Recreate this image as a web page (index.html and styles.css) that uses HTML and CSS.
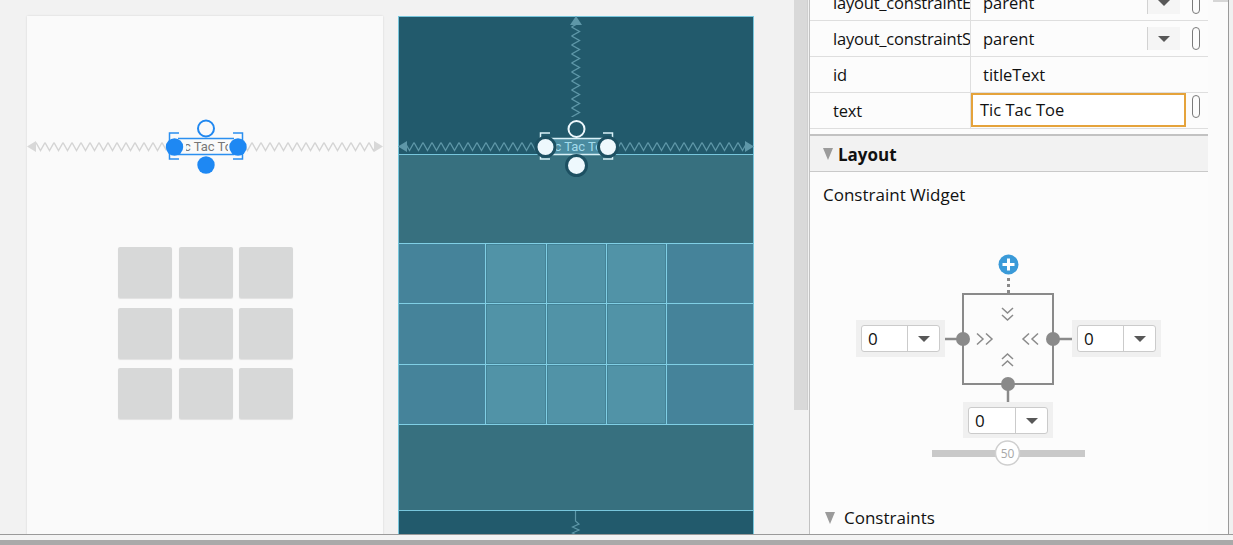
FILE: index.html
```html
<!DOCTYPE html>
<html>
<head>
<meta charset="utf-8">
<link rel="stylesheet" href="styles.css">
</head>
<body>
<div class="app">
  <div class="main">
    <div class="canvas">
      <div class="phone design">
        <div class="board">
          <div class="cell"></div><div class="cell"></div><div class="cell"></div>
          <div class="cell"></div><div class="cell"></div><div class="cell"></div>
          <div class="cell"></div><div class="cell"></div><div class="cell"></div>
        </div>
        <svg class="ov" viewBox="27 16 356 530" width="356" height="530">
          <defs>
            <pattern id="zh1" x="0" y="142" width="9" height="10" patternUnits="userSpaceOnUse">
              <path d="M0 0.5 L4.5 8.5 L9 0.5" fill="none" stroke="#d4d4d4" stroke-width="1.4"/>
            </pattern>
            <clipPath id="c1"><rect x="186" y="138" width="42" height="17"/></clipPath>
          </defs>
          <polygon points="27,146.5 36,141 36,152" fill="#d8d8d8"/>
          <rect x="36" y="142" width="130" height="10" fill="url(#zh1)"/>
          <rect x="246" y="142" width="129" height="10" fill="url(#zh1)"/>
          <polygon points="383,146.5 374,141 374,152" fill="#d8d8d8"/>
          <g fill="none" stroke="#2b8ff0" stroke-width="1.5">
            <path d="M179 133 H169.5 V159 H179"/>
            <path d="M233 133 H242.5 V159 H233"/>
            <path d="M178 138.5 H234 M178 154.5 H234"/>
          </g>
          <text x="206" y="151" text-anchor="middle" class="wtext" fill="#777" clip-path="url(#c1)">Tic Tac Toe</text>
          <circle cx="206" cy="128.5" r="8" fill="#fafafa" stroke="#2188f0" stroke-width="2"/>
          <circle cx="174.5" cy="147" r="8.7" fill="#1e88f3"/>
          <circle cx="238" cy="147" r="8.7" fill="#1e88f3"/>
          <circle cx="206" cy="165" r="8.7" fill="#1e88f3"/>
        </svg>
      </div>
      <div class="phone blueprint">
        <div class="bp-top"></div>
        <div class="bp-body">
          <div class="bp-table">
            <div class="bp-row"><div class="oc"></div><div class="ic"></div><div class="ic"></div><div class="ic"></div><div class="oc"></div></div>
            <div class="bp-row"><div class="oc"></div><div class="ic"></div><div class="ic"></div><div class="ic"></div><div class="oc"></div></div>
            <div class="bp-row"><div class="oc"></div><div class="ic"></div><div class="ic"></div><div class="ic"></div><div class="oc"></div></div>
          </div>
        </div>
        <div class="bp-bottom"></div>
        <svg class="ov ov-bp" viewBox="398 16 356 530" width="356" height="530">
          <defs>
            <pattern id="zh2" x="0" y="142" width="9" height="10" patternUnits="userSpaceOnUse">
              <path d="M0 0.5 L4.5 8.5 L9 0.5" fill="none" stroke="#5e97a8" stroke-width="1.3"/>
            </pattern>
            <pattern id="zv2" x="571" y="0" width="10" height="9" patternUnits="userSpaceOnUse">
              <path d="M0.5 0 L8.5 4.5 L0.5 9" fill="none" stroke="#5e97a8" stroke-width="1.3"/>
            </pattern>
            <clipPath id="c2"><rect x="556" y="138" width="43" height="17"/></clipPath>
          </defs>
          <polygon points="576,16 570,25 582,25" fill="#5e97a8"/>
          <rect x="571" y="25" width="10" height="92" fill="url(#zv2)"/>
          <polygon points="398,146.5 407,141 407,152" fill="#5e97a8"/>
          <rect x="407" y="142" width="129" height="10" fill="url(#zh2)"/>
          <rect x="617" y="142" width="128" height="10" fill="url(#zh2)"/>
          <polygon points="754,146.5 745,141 745,152" fill="#5e97a8"/>
          <rect x="553" y="138" width="47" height="17" fill="#4a8ba0"/>
          <g fill="none" stroke="#d9f1f8" stroke-width="1.5">
            <path d="M550 133 H540.5 V159 H550"/>
            <path d="M603 133 H612.5 V159 H603"/>
            <path d="M549 138.5 H605 M549 154.5 H605"/>
          </g>
          <text x="576.5" y="151" text-anchor="middle" class="wtext" fill="#a3dbec" clip-path="url(#c2)">Tic Tac Toe</text>
          <circle cx="576.5" cy="129" r="8" fill="none" stroke="#eef8fd" stroke-width="2"/>
          <circle cx="545.5" cy="147" r="9.5" fill="#eef8fd" stroke="#1d5062" stroke-width="3"/>
          <circle cx="608" cy="147" r="9.5" fill="#eef8fd" stroke="#1d5062" stroke-width="3"/>
          <circle cx="576.5" cy="165.5" r="10" fill="#eef8fd" stroke="#1d5062" stroke-width="3"/>
          <polyline points="575.5,511 575.5,521 579,524 572.5,527 579,530 572.5,533 576,535" fill="none" stroke="#5e97a8" stroke-width="1.2"/>
        </svg>
      </div>
    </div>
    <div class="vscroll"><div class="thumb"></div></div>
    <div class="panel">
      <div class="pcol">
        <div class="props">
          <div class="row">
            <div class="lbl">layout_constraintEnd_toEndOf</div>
            <div class="val"><span class="vtext">parent</span><span class="dd"><i class="tri"></i></span></div>
            <div class="pillcell"><span class="pill"></span></div>
          </div>
          <div class="row">
            <div class="lbl">layout_constraintStart_toStartOf</div>
            <div class="val"><span class="vtext">parent</span><span class="dd"><i class="tri"></i></span></div>
            <div class="pillcell"><span class="pill"></span></div>
          </div>
          <div class="row">
            <div class="lbl">id</div>
            <div class="val"><span class="vtext">titleText</span></div>
            <div class="pillcell"></div>
          </div>
          <div class="row">
            <div class="lbl">text</div>
            <div class="val"><span class="inp">Tic Tac Toe</span></div>
            <div class="pillcell"><span class="pill"></span></div>
          </div>
        </div>
        <div class="spacer"></div>
        <div class="sec-head"><i class="tri-down"></i><span>Layout</span></div>
        <div class="sec-body">
          <div class="cw-title">Constraint Widget</div>
          <div class="cw">
            <svg class="cw-svg" viewBox="840 240 330 230" width="330" height="230">
              <circle cx="1008.5" cy="264.5" r="10" fill="#3a9ad8"/>
              <path d="M1008.5 258.5 V270.5 M1002.5 264.5 H1014.5" stroke="#fff" stroke-width="3"/>
              <path d="M1008.5 278 V294" stroke="#8a8a8a" stroke-width="3" stroke-dasharray="3 3"/>
              <rect x="963" y="294" width="90" height="90" fill="none" stroke="#8a8a8a" stroke-width="2"/>
              <path d="M945 339 H963 M1053 339 H1072 M1008 384 V402" stroke="#8a8a8a" stroke-width="2.5"/>
              <circle cx="963" cy="339" r="7" fill="#8a8a8a"/>
              <circle cx="1053" cy="339" r="7" fill="#8a8a8a"/>
              <circle cx="1008" cy="384" r="7" fill="#8a8a8a"/>
              <g fill="none" stroke="#8a8a8a" stroke-width="1.5">
                <path d="M1002 308 L1007.5 313 L1013 308 M1002 315 L1007.5 320 L1013 315"/>
                <path d="M1002 359 L1007.5 354 L1013 359 M1002 366 L1007.5 361 L1013 366"/>
                <path d="M977 333.5 L983 339 L977 344.5 M986 333.5 L992 339 L986 344.5"/>
                <path d="M1029 333.5 L1023 339 L1029 344.5 M1038 333.5 L1032 339 L1038 344.5"/>
              </g>
              <rect x="932" y="450" width="153" height="7" fill="#c9c9c9"/>
              <circle cx="1007.5" cy="453" r="12" fill="#fff" stroke="#cfcfcf" stroke-width="1.5"/>
              <text x="1007.5" y="458" text-anchor="middle" class="slabel" fill="#a8a8a8">50</text>
            </svg>
            <div class="mdd mdd-left"><div class="mbox"><span class="num">0</span><span class="mbtn"><i class="tri"></i></span></div></div>
            <div class="mdd mdd-right"><div class="mbox"><span class="num">0</span><span class="mbtn"><i class="tri"></i></span></div></div>
            <div class="mdd mdd-bottom"><div class="mbox"><span class="num">0</span><span class="mbtn"><i class="tri"></i></span></div></div>
          </div>
          <div class="sub-head"><i class="tri-down"></i><span>Constraints</span></div>
        </div>
      </div>
      <div class="pstrip"><div class="pthumb"></div></div>
    </div>
    <div class="redge"></div>
  </div>
  <div class="bottom"><div class="bar"></div></div>
</div>
</body>
</html>
```

FILE: styles.css
```css
* { box-sizing: border-box; }
html, body { margin: 0; padding: 0; }
body {
  width: 1233px;
  height: 545px;
  overflow: hidden;
  background: #f2f2f2;
  font-family: "Open Sans", "Noto Sans", sans-serif;
  color: #111;
}
.app { display: flex; flex-direction: column; height: 545px; }
.main { display: flex; height: 534px; }
.bottom {
  height: 11px;
  border-top: 1px solid #9a9a9a;
  background: #f4f4f4;
  display: flex;
  flex-direction: column;
  justify-content: flex-end;
}
.bottom .bar { height: 5px; background: #a9a9a9; }

/* canvas */
.canvas {
  width: 794px;
  flex: none;
  padding: 16px 0 0 27px;
  display: flex;
  gap: 15px;
  overflow: hidden;
  background: #f2f2f2;
}
.phone { width: 356px; height: 530px; flex: none; position: relative; }
.ov { position: absolute; left: 0; top: 0; }
.ov-bp { left: -1px; top: -1px; }
.wtext { font-family: Roboto, "Liberation Sans", sans-serif; font-size: 13px; }

.design { background: #fafafa; box-shadow: 0 0 2px rgba(0,0,0,0.12); }
.board {
  display: grid;
  grid-template-columns: repeat(3, 54px);
  grid-auto-rows: 51px;
  column-gap: 6.5px;
  row-gap: 9.5px;
  padding: 231px 0 0 91px;
}
.cell {
  background: #d7d8d8;
  border-radius: 2px;
  box-shadow: 0 1px 1px rgba(0,0,0,0.10);
}

.blueprint {
  background: #225a6c;
  border: 1px solid #78c6dc;
  display: flex;
  flex-direction: column;
}
.bp-top { height: 137px; flex: none; }
.bp-body {
  height: 357px;
  flex: none;
  background: #37707f;
  border-top: 1px solid #78c6dc;
  border-bottom: 1px solid #78c6dc;
  padding-top: 88px;
}
.bp-table { border-top: 1px solid #80cfe5; }
.bp-row {
  display: grid;
  grid-template-columns: 86px 61px 60px 61px 1fr;
  height: 60px;
  background: #45839a;
  border-bottom: 1px solid #80cfe5;
}
.bp-row:nth-child(2) { height: 61px; }
.ic {
  background: #5193a7;
  border-left: 1px solid #80cfe5;
  box-shadow: inset 0 0 0 1px rgba(60,120,140,0.6);
}
.ic:nth-child(4) { border-right: 1px solid #80cfe5; }
.bp-bottom { flex: 1; }

/* scrollbar */
.vscroll {
  width: 16px;
  flex: none;
  background: #f2f2f2;
  border-right: 1px solid #c2c2c2;
}
.vscroll .thumb {
  width: 14px;
  height: 410px;
  background: #d9d9d9;
  border-right: 1px solid #cfcfcf;
}

/* panel */
.panel {
  width: 418px;
  flex: none;
  display: flex;
  background: #fcfcfc;
}
.redge { width: 5px; flex: none; border-left: 1px solid #9a9a9a; background: #f0f0f0; }
.pcol { width: 398px; flex: none; display: flex; flex-direction: column; overflow: hidden; }
.pstrip { width: 20px; flex: none; background: #fbfbfb; }
.pthumb { height: 2px; margin-left: 5px; background: #d6d6d6; }

.props { margin-top: -15px; }
.row {
  height: 36px;
  display: flex;
  border-bottom: 1px solid #dedede;
  font-size: 16.5px;
}
.lbl {
  width: 161px;
  flex: none;
  padding-left: 23px;
  border-right: 1px solid #dedede;
  white-space: nowrap;
  overflow: hidden;
  text-overflow: clip;
  line-height: 35px;
  letter-spacing: -0.2px;
}
.val {
  width: 216px;
  flex: none;
  display: flex;
  align-items: center;
}
.vtext { flex: 1; padding-left: 12px; line-height: 35px; white-space: nowrap; }
.dd {
  width: 33px;
  height: 23px;
  margin-right: 7px;
  background: #f5f5f5;
  border-left: 1px solid #d2d2d2;
  display: flex;
  align-items: center;
  justify-content: center;
}
.tri {
  display: block;
  width: 0;
  height: 0;
  border-left: 6.5px solid transparent;
  border-right: 6.5px solid transparent;
  border-top: 6px solid #585858;
}
.inp {
  align-self: flex-start;
  width: 215px;
  height: 34px;
  border: 2px solid #e5a33b;
  padding-left: 7px;
  line-height: 30px;
  background: #fff;
}
.pillcell { width: 21px; flex: none; display: flex; align-items: center; }
.pill {
  display: block;
  width: 8px;
  height: 23px;
  margin-left: 5px;
  border: 1.5px solid #7a7a7a;
  border-radius: 5px;
}
.row:nth-child(4) .pillcell { align-items: flex-start; padding-top: 2px; }

.spacer { height: 5px; flex: none; }
.sec-head {
  height: 38px;
  flex: none;
  border-top: 2px solid #c2c2c2;
  border-bottom: 1px solid #c9c9c9;
  background: #f2f2f2;
  display: flex;
  align-items: center;
  padding-left: 13px;
  padding-top: 1px;
  font-size: 17px;
  font-weight: 700;
}
.tri-down {
  display: block;
  width: 0;
  height: 0;
  border-left: 5.5px solid transparent;
  border-right: 5.5px solid transparent;
  border-top: 12px solid #9b9b9b;
  margin-right: 5px;
}
.sec-body {
  flex: 1;
  padding-left: 13px;
  background: #fcfcfc;
  font-size: 17px;
}
.cw-title { padding-top: 12px; line-height: 22px; }
.cw {
  position: relative;
  width: 330px;
  height: 230px;
  margin: 34px 0 0 17px;
}
.cw-svg { position: absolute; left: 0; top: 0; }
.slabel { font-family: "Open Sans", sans-serif; font-size: 12px; }
.mdd {
  position: absolute;
  width: 89px;
  height: 37px;
  padding: 5px;
  background: #f0f0f0;
}
.mdd-left { left: 16px; top: 80px; }
.mdd-right { left: 232px; top: 80px; }
.mdd-bottom { left: 123px; top: 162px; width: 90px; height: 36px; }
.mbox {
  height: 27px;
  display: flex;
  background: #fff;
  border: 1px solid #cbcbcb;
  border-radius: 3px;
}
.num { flex: 1; padding-left: 6px; line-height: 25px; font-size: 17px; }
.mbtn {
  width: 32px;
  flex: none;
  border-left: 1px solid #cbcbcb;
  display: flex;
  align-items: center;
  justify-content: center;
}
.sub-head {
  margin: 37px 0 0 2px;
  display: flex;
  align-items: center;
  line-height: 22px;
}
.sub-head .tri-down { margin-right: 9px; }
```
